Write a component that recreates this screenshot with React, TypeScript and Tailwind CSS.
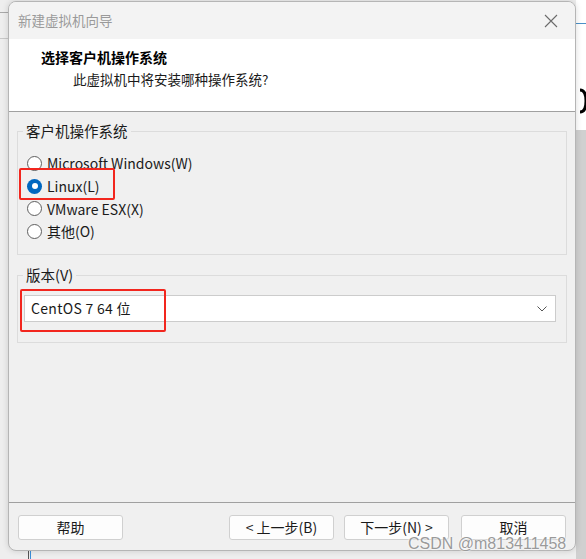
import React from "react";

const font = { fontFamily: '"Noto Sans CJK SC", "Noto Sans", sans-serif' };

function Radio({ label, checked }: { label: string; checked?: boolean }) {
  return (
    <div className="flex h-[22.7px] items-center gap-[5px]">
      {checked ? (
        <span className="flex h-[15px] w-[15px] items-center justify-center rounded-full bg-[#0067c0]">
          <span className="h-[6px] w-[6px] rounded-full bg-white" />
        </span>
      ) : (
        <span className="h-[15px] w-[15px] rounded-full border border-[#5f5f5f] bg-white" />
      )}
      <span className="text-[14px] leading-none text-[#1a1a1a]">{label}</span>
    </div>
  );
}

function Btn({ label, className = "" }: { label: string; className?: string }) {
  return (
    <button
      className={`flex h-[25px] w-[105px] items-center justify-center rounded-[3px] border border-[#d0d0d0] bg-[#fdfdfd] text-[14px] text-[#1a1a1a] ${className}`}
    >
      {label}
    </button>
  );
}

export default function App() {
  return (
    <div className="relative h-[559px] w-[586px] overflow-hidden bg-[#eeeeee]" style={font}>
      {/* background app fragments */}
      <div className="absolute left-0 top-[12px] h-px w-[10px] bg-[#a8a8a8]" />
      <div className="absolute left-0 top-[38px] h-px w-[10px] bg-[#c8c8c8]" />
      <div className="absolute right-0 top-0 h-[130px] w-[10px] bg-white" />
      <div className="absolute right-0 top-[23px] h-px w-[10px] bg-[#4a90c8]" />
      <div className="absolute right-0 top-[130px] h-[429px] w-[10px] bg-[#d0d0d0]" />
      <svg className="absolute left-[578px] top-[88px]" width="8" height="26" viewBox="0 0 8 26">
        <path d="M2 2 Q8 2 8 13 Q8 24 2 24" fill="none" stroke="#000" strokeWidth="3" />
      </svg>
      <div className="absolute left-[28px] top-[549px] h-[10px] w-px bg-[#555]" />
      <div className="absolute left-[30px] top-[549px] h-[10px] w-px bg-[#3b8ed8]" />

      {/* dialog */}
      <div className="relative ml-[8px] mt-[1px] flex h-[550px] w-[568px] flex-col overflow-hidden rounded-[8px] border border-[#b5b5b5] bg-[#f0f0f0] shadow-[0_0_6px_rgba(0,0,0,0.15)]">
        {/* title bar */}
        <div className="flex h-[37px] shrink-0 items-center justify-between bg-[#f3f3f3] pl-[9px] pr-[14px]">
          <span className="text-[13.5px] text-[#9a9a9a]">新建虚拟机向导</span>
          <svg width="14" height="14" viewBox="0 0 14 14" className="mr-[3px]">
            <path d="M1 1L13 13M13 1L1 13" stroke="#6b6b6b" strokeWidth="1.1" />
          </svg>
        </div>
        {/* header */}
        <div className="flex h-[73px] shrink-0 flex-col border-b border-[#a0a0a0] bg-white pl-[32px] pt-[8px]">
          <span className="text-[14px] font-bold leading-[20px] text-black">选择客户机操作系统</span>
          <span className="ml-[32px] mt-[2px] text-[13.5px] leading-[20px] text-[#1a1a1a]">此虚拟机中将安装哪种操作系统?</span>
        </div>
        {/* body */}
        <div className="flex flex-1 flex-col px-[8px] pt-[9px]">
          <fieldset className="h-[134px] border border-[#dcdcdc] pl-[5px] pt-[11px]">
            <legend className="px-[3px] text-[14.5px] leading-[20px] text-[#1a1a1a]">客户机操作系统</legend>
            <div className="flex flex-col pl-[4px]">
              <Radio label="Microsoft Windows(W)" />
              <Radio label="Linux(L)" checked />
              <Radio label="VMware ESX(X)" />
              <Radio label="其他(O)" />
            </div>
          </fieldset>
          <fieldset className="mt-[10px] h-[78px] border border-[#dcdcdc] pl-[6px] pr-[10px] pt-[10px]">
            <legend className="-ml-px px-[3px] text-[14.5px] leading-[20px] text-[#1a1a1a]">版本(V)</legend>
            <div className="flex h-[27px] items-center justify-between border border-[#cccccc] bg-white pl-[6px] pr-[8px]">
              <span className="text-[14px] tracking-[0.3px] text-[#1a1a1a]">CentOS 7 64 位</span>
              <svg width="10" height="6" viewBox="0 0 10 6">
                <path d="M0.5 0.5L5 5L9.5 0.5" fill="none" stroke="#555" strokeWidth="1" />
              </svg>
            </div>
          </fieldset>
        </div>
        {/* footer */}
        <div className="flex h-[48px] shrink-0 items-start border-t border-[#a0a0a0] pl-[9px] pt-[12px]">
          <Btn label="帮助" />
          <Btn label="< 上一步(B)" className="ml-[106px]" />
          <Btn label="下一步(N) >" className="ml-[10px]" />
          <Btn label="取消" className="ml-[12px]" />
        </div>

        {/* red annotation boxes */}
        <div className="absolute left-[10px] top-[166px] h-[32px] w-[96px] rounded-[2px] border-2 border-[#f2261e]" />
        <div className="absolute left-[11px] top-[287px] h-[43px] w-[146px] rounded-[2px] border-2 border-[#f2261e]" />
      </div>

      {/* watermark */}
      <div
        className="absolute left-[408px] top-[534px] text-[16px] leading-[20px] text-[#9a9a9a]"
        style={{ fontFamily: '"Liberation Sans", sans-serif', textShadow: "0 0 2px #fff, 0 0 2px #fff" }}
      >
        CSDN @m813411458
      </div>
    </div>
  );
}
